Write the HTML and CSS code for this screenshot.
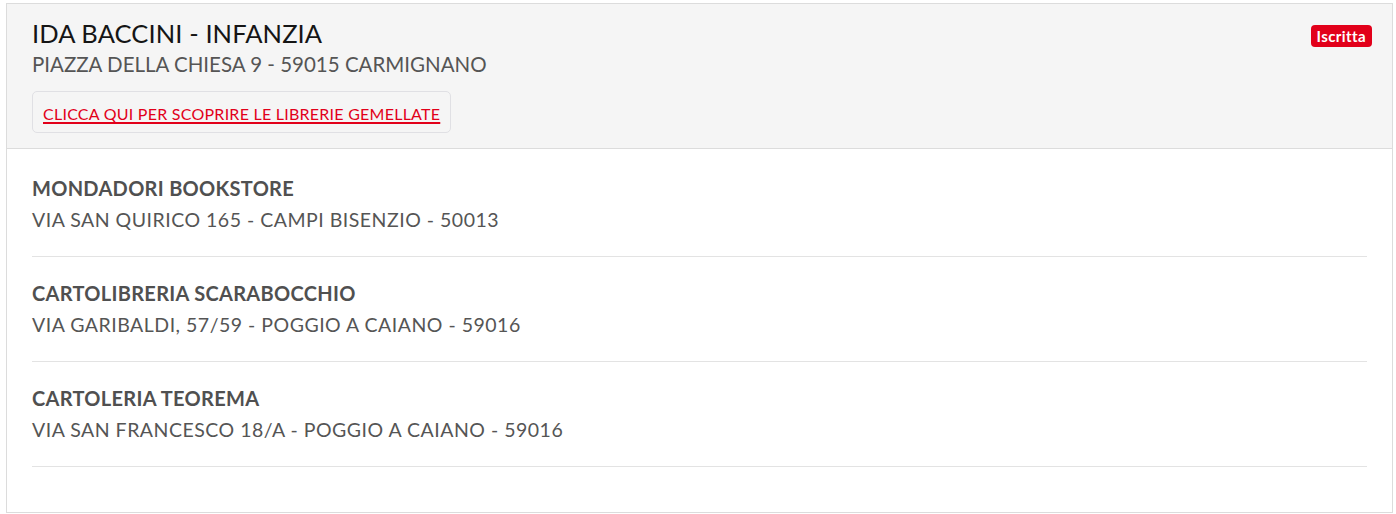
FILE: index.html
```html
<!DOCTYPE html>
<html lang="it">
<head>
    <meta charset="UTF-8">
    <title>Librerie gemellate</title>
    <link rel="stylesheet" href="styles.css">
</head>
<body>
    <div class="card">
        <!-- Scuola -->
        <div class="card-header">
            <div class="school">
                <h1 class="school-name">IDA BACCINI - INFANZIA</h1>
                <p class="school-address">PIAZZA DELLA CHIESA 9 - 59015 CARMIGNANO</p>
                <div class="twin-box">
                    <a href="#" class="twin-link">CLICCA QUI PER SCOPRIRE LE LIBRERIE GEMELLATE</a>
                </div>
            </div>
            <span class="badge">Iscritta</span>
        </div>

        <!-- Librerie -->
        <ul class="shops">
            <li class="shop">
                <div class="shop-name">MONDADORI BOOKSTORE</div>
                <div class="shop-address">VIA SAN QUIRICO 165 - CAMPI BISENZIO - 50013</div>
            </li>
            <li class="shop">
                <div class="shop-name">CARTOLIBRERIA SCARABOCCHIO</div>
                <div class="shop-address">VIA GARIBALDI, 57/59 - POGGIO A CAIANO - 59016</div>
            </li>
            <li class="shop">
                <div class="shop-name">CARTOLERIA TEOREMA</div>
                <div class="shop-address">VIA SAN FRANCESCO 18/A - POGGIO A CAIANO - 59016</div>
            </li>
        </ul>
    </div>
</body>
</html>
```

FILE: styles.css
```css
body {
    margin: 3px 3px 0 6px;
    font-family: 'Lato', 'Open Sans', sans-serif;
    background-color: #fff;
    color: #555;
}

.card {
    border: 1px solid #dcdcdc;
    height: 510px;
    box-sizing: border-box;
}

.card-header {
    display: flex;
    justify-content: space-between;
    align-items: flex-start;
    background-color: #f5f5f5;
    border-bottom: 1px solid #dcdcdc;
    padding: 14px 20px 15px 25px;
}

.school-name {
    margin: 0;
    font-size: 25.5px;
    font-weight: 400;
    line-height: 30px;
    letter-spacing: 0.1px;
    color: #151515;
}

.school-address {
    margin: 2px 0 0 0;
    font-size: 20.5px;
    line-height: 28px;
    color: #555;
}

.twin-box {
    display: inline-block;
    margin-top: 13px;
    padding: 12px 10px 9px 10px;
    border: 1px solid #e0e0e4;
    border-radius: 5px;
    line-height: 19px;
}

.twin-link {
    font-size: 16px;
    letter-spacing: 0.25px;
    color: #e2001a;
    text-decoration: underline;
    text-decoration-thickness: 2px;
    text-underline-offset: 2px;
}

.badge {
    margin-top: 7px;
    background-color: #e2001a;
    color: #fff;
    font-size: 15px;
    font-weight: 700;
    letter-spacing: 0.4px;
    padding: 2px 6px;
    border-radius: 4px;
    line-height: 18px;
}

.shops {
    list-style: none;
    margin: 0;
    padding: 3px 25px 0 25px;
}

.shop {
    padding: 23px 0 22px 0;
    border-bottom: 1px solid #e3e3e3;
}

.shop-name {
    font-size: 20px;
    font-weight: 700;
    letter-spacing: 0.3px;
    line-height: 26px;
    color: #505050;
}

.shop-address {
    font-size: 19.5px;
    letter-spacing: 0.5px;
    line-height: 28px;
    margin-top: 5px;
}
```
